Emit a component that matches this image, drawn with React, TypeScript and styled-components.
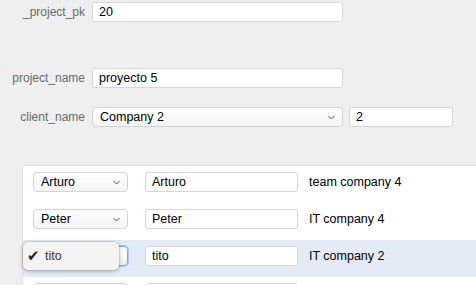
import { FC } from 'react';
import styled, { createGlobalStyle } from 'styled-components';

const GlobalStyle = createGlobalStyle`
  html, body {
    margin: 0;
    padding: 0;
    background: #efefef;
    font-family: 'Liberation Sans', Arial, Helvetica, sans-serif;
    font-size: 12px;
    color: #000;
    overflow: hidden;
  }
`;

const Page = styled.div`
  width: 476px;
  height: 285px;
  overflow: hidden;
  padding-top: 2px;
  box-sizing: border-box;
`;

const FieldRow = styled.div<{ $gap: number }>`
  display: flex;
  align-items: center;
  gap: 6px;
  margin-bottom: ${(p) => p.$gap}px;
`;

const Label = styled.label`
  width: 85px;
  text-align: right;
  color: #6a6a6a;
  font-size: 12px;
  margin-right: 1px;
`;

const TextBox = styled.div<{ $width: number }>`
  width: ${(p) => p.$width}px;
  height: 20px;
  box-sizing: border-box;
  background: #fff;
  border: 1px solid #d6d6d6;
  border-radius: 3px;
  padding: 0 6px;
  display: flex;
  align-items: center;
  font-size: 12.5px;
`;

const SelectBox = styled.div<{ $width: number; $focused?: boolean }>`
  width: ${(p) => p.$width}px;
  height: 20px;
  box-sizing: border-box;
  background: linear-gradient(#ffffff, #f4f4f4);
  border: 1px solid ${(p) => (p.$focused ? '#7aa7e0' : '#d3d3d3')};
  box-shadow: ${(p) => (p.$focused ? '0 0 0 1px #a9c6ee' : 'none')};
  border-radius: 4px;
  padding: 0 7px;
  display: flex;
  align-items: center;
  justify-content: space-between;
  font-size: 12.5px;
`;

const Chevron: FC = () => (
  <svg width="7" height="5" viewBox="0 0 7 5">
    <path d="M0.5 1 L3.5 4 L6.5 1" fill="none" stroke="#555" strokeWidth="1" />
  </svg>
);

const Panel = styled.div`
  margin-top: 38px;
  margin-left: 22px;
  background: #fff;
  border-top: 1px solid #d9d9d9;
  border-left: 1px solid #e2e2e2;
`;

const Row = styled.div<{ $active?: boolean }>`
  height: 37px;
  box-sizing: border-box;
  display: flex;
  align-items: center;
  padding: 6px 0 11px 10px;
  background: ${(p) => (p.$active ? '#e3ebf6' : '#fff')};
  position: relative;
`;

const Cell = styled.div`
  margin-right: 17px;
`;

const Company = styled.span`
  margin-left: -6px;
  font-size: 12.5px;
`;

const Popup = styled.div`
  position: absolute;
  left: 0;
  top: 2px;
  width: 96px;
  height: 28px;
  box-sizing: border-box;
  background: #f4f4f4;
  border-radius: 5px;
  box-shadow: 0 1px 4px rgba(0, 0, 0, 0.3), 0 0 0 0.5px rgba(0, 0, 0, 0.12);
  display: flex;
  align-items: center;
  padding-left: 4px;
  gap: 5px;
  font-size: 12.5px;
  color: #333;
`;

const Check = styled.span`
  font-size: 15px;
  color: #222;
`;

interface IPerson {
  name: string;
  company: string;
}

const people: IPerson[] = [
  { name: 'Arturo', company: 'team company 4' },
  { name: 'Peter', company: 'IT company 4' },
  { name: 'tito', company: 'IT company 2' },
  { name: '', company: '' },
];

export default function App() {
  return (
    <Page>
      <GlobalStyle />
      <FieldRow $gap={46}>
        <Label>_project_pk</Label>
        <TextBox $width={251}>20</TextBox>
      </FieldRow>
      <FieldRow $gap={19}>
        <Label>project_name</Label>
        <TextBox $width={251}>proyecto 5</TextBox>
      </FieldRow>
      <FieldRow $gap={0}>
        <Label>client_name</Label>
        <SelectBox $width={251}>
          Company 2
          <Chevron />
        </SelectBox>
        <TextBox $width={104}>2</TextBox>
      </FieldRow>
      <Panel>
        {people.map((p, i) => (
          <Row key={i} $active={i === 2}>
            <Cell>
              <SelectBox $width={95} $focused={i === 2}>
                {i === 2 ? '' : p.name}
                <Chevron />
              </SelectBox>
            </Cell>
            <Cell>
              <TextBox $width={153}>{p.name}</TextBox>
            </Cell>
            <Company>{p.company}</Company>
            {i === 2 && (
              <Popup>
                <Check>✔</Check>
                tito
              </Popup>
            )}
          </Row>
        ))}
      </Panel>
    </Page>
  );
}
